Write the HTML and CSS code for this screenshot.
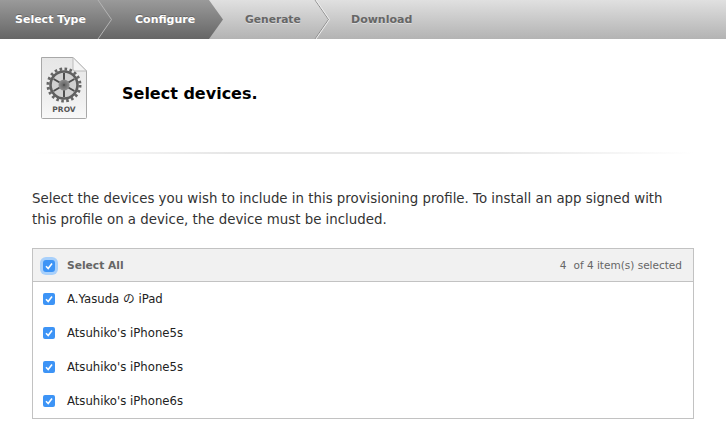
FILE: index.html
```html
<!DOCTYPE html>
<html lang="en">
<head>
<meta charset="utf-8">
<title>Select devices</title>
<link rel="stylesheet" href="styles.css">
</head>
<body>
<nav class="steps">
  <div class="steps-done">
    <span class="step step-first">Select Type</span>
    <svg class="sep" width="16" height="39" viewBox="0 0 16 39"><path d="M1 0 L14.500 19.500 L1 39" fill="none" stroke="#b4b4b4" stroke-width="1"/></svg>
    <span class="step step-second">Configure</span>
  </div>
  <span class="step step-third">Generate</span>
  <svg class="sep" width="16" height="39" viewBox="0 0 16 39"><path d="M1 0 L14.500 19.500 L1 39" fill="none" stroke="#8e8e8e" stroke-width="1"/><path d="M2 0 L15.500 19.500 L2 39" fill="none" stroke="#eeeeee" stroke-width="1"/></svg>
  <span class="step step-fourth">Download</span>
</nav>
<header class="head">
  <svg class="prov" width="48" height="64" viewBox="0 0 48 64">
    <defs>
      <linearGradient id="page" x1="0" y1="0" x2="0" y2="1"><stop offset="0" stop-color="#e6e6e6"/><stop offset="0.7" stop-color="#f0f0f0"/><stop offset="1" stop-color="#f8f8f8"/></linearGradient>
      <radialGradient id="hub"><stop offset="0" stop-color="#3c3c3c"/><stop offset="0.3" stop-color="#6e6e6e"/><stop offset="1" stop-color="#8e8e8e"/></radialGradient>
    </defs>
    <path d="M0.500 1.500 H32 L45.500 15 V61.500 Q45.500 62.500 44.500 62.500 H1.500 Q0.500 62.500 0.500 61.500 Z" fill="url(#page)" stroke="#a8a8a8"/>
    <path d="M32 1.500 L45.500 15 H34 Q32 15 32 13 Z" fill="#f4f4f4" stroke="#bbbbbb"/>
    <g transform="translate(23 29)">
      <circle r="13.500" fill="#c4c4c4" fill-opacity="0.700"/>
      <circle r="16" fill="none" stroke="#666" stroke-width="3" stroke-dasharray="2.600 2.430"/>
      <circle r="13.500" fill="none" stroke="#5f5f5f" stroke-width="2.600"/>
      <g stroke="#4e4e4e" stroke-width="2">
        <path d="M0 -12 V12 M-10.400 -6 L10.400 6 M-10.400 6 L10.400 -6"/>
      </g>
      <circle r="5.500" fill="url(#hub)"/>
    </g>
    <text class="prov-label" x="23" y="56" text-anchor="middle">PROV</text>
  </svg>
  <h1 class="title">Select devices.</h1>
</header>
<div class="rule"></div>
<p class="intro">Select the devices you wish to include in this provisioning profile. To install an app signed with this profile on a device, the device must be included.</p>
<section class="list">
  <div class="list-head">
    <label class="row-label head-label"><span class="check check-focus"><svg width="8" height="8" viewBox="0 0 8 8"><path d="M1 4.200 L3.200 6.500 L7 1.500" fill="none" stroke="#fff" stroke-width="1.600"/></svg></span>Select All</label>
    <span class="count">4<span class="count-rest">of 4 item(s) selected</span></span>
  </div>
  <div class="list-row"><span class="check"><svg width="8" height="8" viewBox="0 0 8 8"><path d="M1 4.200 L3.200 6.500 L7 1.500" fill="none" stroke="#fff" stroke-width="1.600"/></svg></span>A.Yasuda の iPad</div>
  <div class="list-row"><span class="check"><svg width="8" height="8" viewBox="0 0 8 8"><path d="M1 4.200 L3.200 6.500 L7 1.500" fill="none" stroke="#fff" stroke-width="1.600"/></svg></span>Atsuhiko's iPhone5s</div>
  <div class="list-row"><span class="check"><svg width="8" height="8" viewBox="0 0 8 8"><path d="M1 4.200 L3.200 6.500 L7 1.500" fill="none" stroke="#fff" stroke-width="1.600"/></svg></span>Atsuhiko's iPhone5s</div>
  <div class="list-row"><span class="check"><svg width="8" height="8" viewBox="0 0 8 8"><path d="M1 4.200 L3.200 6.500 L7 1.500" fill="none" stroke="#fff" stroke-width="1.600"/></svg></span>Atsuhiko's iPhone6s</div>
</section>
</body>
</html>
```
FILE: styles.css
```css
html, body {
  margin: 0;
  padding: 0;
  height: 433px;
  overflow: hidden;
  background: #fff;
  font-family: "DejaVu Sans", "Noto Sans CJK JP", sans-serif;
  color: #222;
}
.steps {
  display: flex;
  align-items: center;
  height: 39px;
  background: linear-gradient(#e0e0e0, #b3b3b3);
  font-size: 11px;
  font-weight: bold;
}
.steps-done {
  display: flex;
  align-items: center;
  height: 39px;
  width: 223px;
  background: linear-gradient(#9a9a9a, #666);
  clip-path: polygon(0 0, 209px 0, 223px 19.500px, 209px 39px, 0 39px);
  flex: none;
}
.step { white-space: nowrap; }
.sep { flex: none; }
.step-first { color: #fff; margin-left: 15px; width: 82px; text-shadow: 0 -1px 0 #666; }
.step-second { color: #fff; margin-left: 22px; text-shadow: 0 -1px 0 #666; }
.step-third { color: #666; margin-left: 22px; width: 69px; font-size: 10.700px; text-shadow: 0 1px 0 #ddd; }
.step-fourth { color: #666; margin-left: 21px; text-shadow: 0 1px 0 #ddd; }
.head {
  display: flex;
  align-items: center;
  height: 64px;
  padding: 17px 0 0 41px;
}
.prov { flex: none; }
.prov-label {
  font-family: "DejaVu Sans", sans-serif;
  font-size: 7.500px;
  font-weight: bold;
  fill: #555;
}
.title {
  margin: 10px 0 0 33px;
  font-size: 16px;
  font-weight: bold;
  color: #000;
}
.rule {
  height: 2px;
  margin: 32px 0 0 32px;
  width: 662px;
  background: linear-gradient(90deg, #fff, #e6e6e6 30%, #e6e6e6 70%, #fff);
}
.intro {
  margin: 34px 0 0 32px;
  width: 640px;
  font-size: 13.350px;
  line-height: 21px;
  color: #333;
}
.list {
  margin: 18px 0 0 32px;
  width: 660px;
  border: 1px solid #c2c2c2;
  height: 169px;
}
.list-head {
  display: flex;
  align-items: center;
  justify-content: space-between;
  height: 32px;
  padding: 0 11px 0 10px;
  background: #f1f1f1;
  border-bottom: 1px solid #c2c2c2;
}
.row-label { display: flex; align-items: center; }
.head-label { font-size: 10.700px; font-weight: bold; color: #666; padding-top: 1px; line-height: 14px; }
.count { font-size: 10.500px; color: #666; }
.count-rest { margin-left: 7px; }
.list-row {
  display: flex;
  align-items: center;
  height: 34px;
  padding-left: 10px;
  font-size: 11.700px;
  line-height: 14px;
  color: #222;
}
.check {
  display: inline-flex;
  align-items: center;
  justify-content: center;
  width: 12px;
  height: 12px;
  margin-right: 12px;
  border-radius: 2px;
  background: #3d94f6;
  flex: none;
}
.check-focus { box-shadow: 0 0 0 3px #a8d0fb; border-radius: 3px; }
```
